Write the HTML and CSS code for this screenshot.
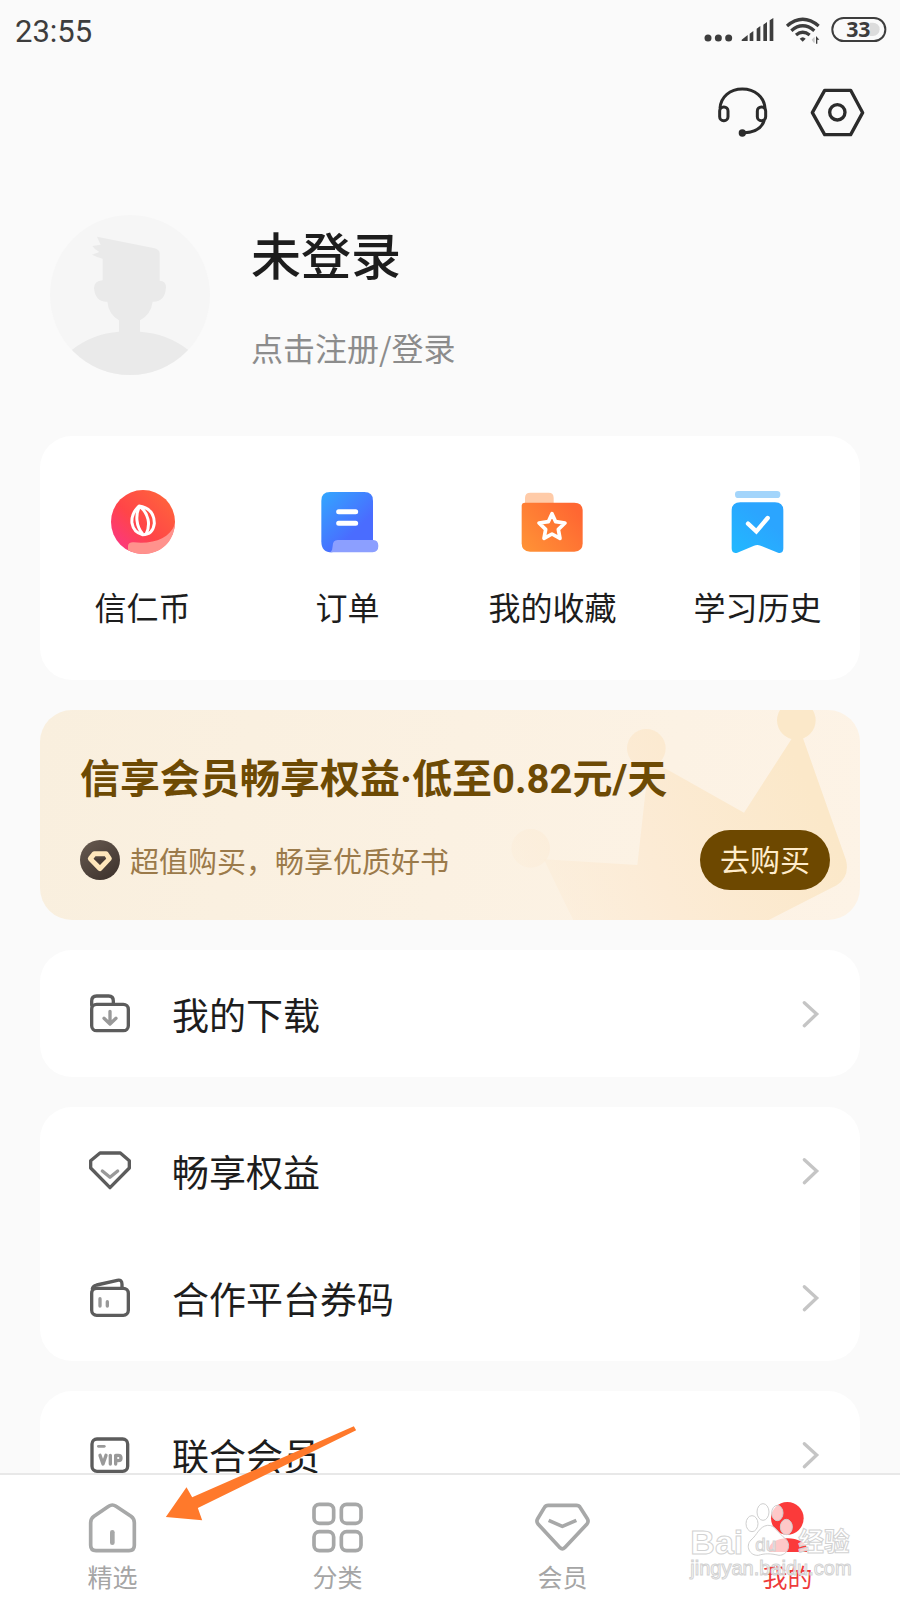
FILE: index.html
```html
<!DOCTYPE html>
<html lang="zh-CN">
<head>
<meta charset="utf-8">
<meta name="viewport" content="width=device-width, initial-scale=1">
<title>我的</title>
<link rel="stylesheet" href="styles.css">
</head>
<body>
<div class="app">
  <header class="status">
    <time class="clock">23:55</time>
    <svg class="status-icons" viewBox="70 45 558 90" fill="#3d3d3d" role="img" aria-label="信号 电量 33">
      <circle cx="85" cy="114" r="10.500"/><circle cx="116" cy="114" r="10.500"/><circle cx="147" cy="114" r="10.500"/>
      <path d="M187 123q-3-3 1-5l16-13v18zM210 123V101l11-8v30zM231 123V86l11-8v45zM251 123V74l11-8v57zM270 123V61l11-7v69z"/>
      <g fill="none" stroke="#3d3d3d" stroke-width="10"><path d="M322 78Q369 38 417 78"/><path d="M335 92Q369 63 404 92"/><path d="M349 105Q369 89 390 105"/></g>
      <path d="M360 116q9-9 18 0l-9 9z"/>
      <path d="M396 119l7-7v17zM403 112h2v16h-2z" fill="#c9c9c9"/><path d="M409 108l10 11h-6v12h-4z"/>
      <path d="M570 68h10a20 20 0 0 1 0 40h-10z" fill="#dcdcdc"/>
      <rect x="458" y="54" width="159" height="69" rx="34" fill="none" stroke="#3d3d3d" stroke-width="6"/>
      <text class="battery-text" x="536" y="111" text-anchor="middle">33</text>
    </svg>
  </header>

  <main class="page">
    <div class="tools">
      <button class="icon-btn" type="button" aria-label="客服">
        <svg width="51" height="52" viewBox="111 258 153 156" fill="none" stroke="#2b2b2b" stroke-width="9">
          <path d="M120 325C122 290 150 267 187 267S253 290 255 325"/>
          <rect x="119" y="321" width="25" height="41" rx="12"/><rect x="232" y="321" width="25" height="41" rx="12"/>
          <path d="M253 360C246 386 222 398 187 399"/><circle cx="187" cy="399" r="11" fill="#2b2b2b" stroke="none"/>
        </svg>
      </button>
      <button class="icon-btn" type="button" aria-label="设置">
        <svg width="55" height="52" viewBox="390 258 165 156" fill="none" stroke="#2b2b2b" stroke-width="10" stroke-linejoin="round">
          <path d="M434 271H512L548 338L512 404H434L397 338Z"/><circle cx="472" cy="337" r="23"/>
        </svg>
      </button>
    </div>

    <a class="profile" href="#login">
      <svg class="avatar" viewBox="60 45 480 480">
        <defs><clipPath id="disc"><circle cx="300" cy="285" r="240"/></clipPath></defs>
        <circle cx="300" cy="285" r="240" fill="#f6f6f6"/>
        <g clip-path="url(#disc)" fill="#eaeaea">
          <path d="M201 110L370 144Q389 148 389 160V242Q408 243 408 262Q405 307 368 305Q363 343 330 361V395Q410 400 474 449L540 525H60L126 449Q190 400 267 395V361Q236 343 232 305Q196 307 192 265Q192 243 218 241V176Q200 171 186 164L208 156Q194 149 187 138L212 134Z"/>
        </g>
      </svg>
      <span class="profile-text">
        <strong class="name">未登录</strong>
        <span class="hint">点击注册/登录</span>
      </span>
    </a>

    <nav class="card quick" aria-label="快捷入口">
      <a class="quick-item" href="#coin">
        <svg class="quick-icon" viewBox="80 48 216 216">
          <defs><linearGradient id="coin" x1="0" y1="1" x2="1" y2="0"><stop offset="0" stop-color="#fa3391"/><stop offset=".45" stop-color="#ff4548"/><stop offset="1" stop-color="#ff6a39"/></linearGradient></defs>
          <circle cx="188" cy="156" r="96" fill="url(#coin)"/>
          <path d="M284 162C280 216 242 252 188 252Q164 252 143 241V228Q144 216 160 217C220 222 266 208 284 162Z" fill="#ff928d"/>
          <g fill="none" stroke="#fff" stroke-width="9" stroke-linejoin="round"><path d="M176 108C158 125 153 141 155 160Q160 188 187 194Q218 194 222 160C222 132 206 113 176 108Z"/><path d="M177 110C165 135 167 169 187 192M181 111C204 131 211 162 198 191"/></g>
        </svg>
        <span>信仁币</span>
      </a>
      <a class="quick-item" href="#orders">
        <svg class="quick-icon" viewBox="696 48 216 216">
          <defs><linearGradient id="order" x1="0" y1="0" x2=".6" y2=".7"><stop offset="0" stop-color="#32a7ff"/><stop offset="1" stop-color="#4a6cff"/></linearGradient></defs>
          <path d="M750 66H853Q879 66 879 92V210L756 247Q724 247 724 215V92Q724 66 750 66Z" fill="url(#order)"/>
          <path d="M773 210H880Q895 210 895 228T878 247H751Q758 241 758 228Q758 210 773 210Z" fill="#8c9fff"/>
          <path d="M776 125H827M776 160H827" stroke="#fff" stroke-width="15" stroke-linecap="round"/>
        </svg>
        <span>订单</span>
      </a>
      <a class="quick-item" href="#favorites">
        <svg class="quick-icon" viewBox="112 48 216 216">
          <defs><linearGradient id="fav" x1="0" y1="1" x2="1" y2=".3"><stop offset="0" stop-color="#ff9436"/><stop offset="1" stop-color="#ff6732"/></linearGradient></defs>
          <path d="M136 100V84Q136 68 152 68H207Q222 68 222 84V100Z" fill="#ffcba8"/>
          <path d="M136 98H284Q309 98 309 123V220Q309 245 284 245H151Q126 245 126 220V108Q126 98 136 98Z" fill="url(#fav)"/>
          <path d="M217 131L228 155L256 159L236 178L241 205L217 192L193 205L198 178L178 159L206 155Z" fill="none" stroke="#fff" stroke-width="11" stroke-linejoin="round"/>
        </svg>
        <span>我的收藏</span>
      </a>
      <a class="quick-item" href="#history">
        <svg class="quick-icon" viewBox="726 48 216 216">
          <defs><linearGradient id="hist" x1="0" y1="1" x2=".6" y2=".3"><stop offset="0" stop-color="#21b9ff"/><stop offset="1" stop-color="#2ba5ff"/></linearGradient></defs>
          <rect x="765" y="63" width="136" height="21" rx="10" fill="#a3d5fb"/>
          <path d="M781 97H885Q910 97 910 122V235Q910 252 894 248L842 227Q832 223 822 227L772 248Q755 252 755 235V122Q755 97 781 97Z" fill="url(#hist)"/>
          <path d="M804 161L829 184L863 144" fill="none" stroke="#fff" stroke-width="13" stroke-linecap="round" stroke-linejoin="miter"/>
        </svg>
        <span>学习历史</span>
      </a>
    </nav>

    <section class="banner">
      <svg class="crown" viewBox="0 30 1140 630">
        <defs><linearGradient id="crown" gradientUnits="userSpaceOnUse" x1="100" y1="600" x2="960" y2="200"><stop offset="0" stop-color="#fcebd5" stop-opacity=".25"/><stop offset=".45" stop-color="#fcebd5"/><stop offset="1" stop-color="#fbe8c9"/></linearGradient></defs>
        <g fill="url(#crown)"><circle cx="152" cy="445" r="58"/><circle cx="499" cy="145" r="58"/><circle cx="949" cy="61" r="58"/>
        <path d="M192 478L472 495L505 200Q540 195 575 216L792 338L938 112H968L1098 480Q1110 530 1070 556L866 660H280Q230 560 192 478Z"/></g>
      </svg>
      <div class="banner-body">
        <h2 class="banner-title">信享会员畅享权益·低至0.82元/天</h2>
        <div class="banner-row">
          <svg class="badge" viewBox="150 420 120 120">
            <defs><linearGradient id="badge" x1="0" y1="0" x2=".7" y2="1"><stop offset="0" stop-color="#685b51"/><stop offset="1" stop-color="#40352f"/></linearGradient></defs>
            <circle cx="210" cy="480" r="60" fill="url(#badge)"/>
            <path d="M193 461H228L238 476L210 506L181 476Z" fill="none" stroke="#ffe7bb" stroke-width="15" stroke-linejoin="round"/>
            <path d="M191 476H228L210 493Z" fill="#4a3d35"/>
          </svg>
          <p class="banner-sub">超值购买，畅享优质好书</p>
          <button class="buy" type="button">去购买</button>
        </div>
      </div>
    </section>

    <div class="card">
      <a class="row" href="#downloads">
        <svg class="row-icon" viewBox="57 67 126 126">
          <path d="M65 104V91Q65 76 80 76H116Q130 76 130 91V100"/><rect x="65" y="101" width="110" height="79" rx="15"/>
          <path class="soft" d="M120 122V159M102 143L120 160L138 143"/>
        </svg>
        <span class="row-label">我的下载</span>
        <svg class="chevron" viewBox="60 113 66 96"><path d="M73 127L110 161L73 196"/></svg>
      </a>
    </div>

    <div class="card">
      <a class="row" href="#benefits">
        <svg class="row-icon" viewBox="57 538 126 126">
          <path d="M90 547H151L178 570V592L120 651L62 592V570Z"/><path class="soft" d="M97 601L120 620L143 601"/>
        </svg>
        <span class="row-label">畅享权益</span>
        <svg class="chevron" viewBox="60 113 66 96"><path d="M73 127L110 161L73 196"/></svg>
      </a>
      <a class="row" href="#coupons">
        <svg class="row-icon" viewBox="57 81 126 126">
          <rect x="65" y="115" width="110" height="81" rx="15"/><path d="M67 117Q68 108 80 105L142 91Q156 88 156 103V114"/>
          <path class="soft" d="M90 146V168M112 155V168"/>
        </svg>
        <span class="row-label">合作平台券码</span>
        <svg class="chevron" viewBox="60 113 66 96"><path d="M73 127L110 161L73 196"/></svg>
      </a>
    </div>

    <div class="card">
      <a class="row" href="#union">
        <svg class="row-icon" viewBox="57 553 126 126">
          <rect x="66" y="568" width="107" height="97" rx="15"/><path class="soft" d="M85 590H103" stroke-width="8"/>
          <path class="soft" d="M90 617L99 643L108 617M121 617V643M137 643V617H145Q153 617 153 625T145 633H137"/>
        </svg>
        <span class="row-label">联合会员</span>
        <svg class="chevron" viewBox="60 113 66 96"><path d="M73 127L110 161L73 196"/></svg>
      </a>
    </div>
  </main>

  <nav class="tabs" aria-label="主导航">
    <a class="tab" href="#featured">
      <svg class="tab-icon" viewBox="39 741 180 180"><path d="M62 818Q62 806 72 799L116 769Q127 761 138 769L183 799Q193 806 193 818V886Q193 902 177 902H78Q62 902 62 886Z"/><path d="M127 847V878" stroke-width="14"/></svg>
      <span>精选</span>
    </a>
    <a class="tab" href="#categories">
      <svg class="tab-icon" viewBox="714 741 180 180"><rect x="732" y="763" width="59" height="57" rx="16"/><rect x="814" y="763" width="59" height="57" rx="16"/><rect x="732" y="845" width="59" height="57" rx="16"/><rect x="814" y="845" width="59" height="57" rx="16"/></svg>
      <span>分类</span>
    </a>
    <a class="tab" href="#member">
      <svg class="tab-icon" viewBox="759 111 180 180"><path d="M805 136H889Q897 136 901 143L922 176Q927 184 921 192L854 263Q847 270 840 263L774 192Q768 184 773 176L793 143Q797 136 805 136Z"/><path d="M806 181L847 199L889 181" stroke-linecap="butt"/></svg>
      <span>会员</span>
    </a>
    <a class="tab tab-active" href="#mine" aria-current="page">
      <svg class="tab-icon" viewBox="264 201 180 180"><g fill="#fb3a3a" stroke="none"><circle cx="352" cy="265" r="49"/><path d="M297 366V354Q305 327 352 325Q401 327 411 354V366Z"/></g></svg>
      <span>我的</span>
    </a>
    <svg class="pointer" viewBox="280 520 590 300" aria-hidden="true"><path d="M288 802L350 713L367 743L852 530L859 542L384 775L397 812Z" fill="#ff792b"/></svg>
    <svg class="watermark" viewBox="50 210 510 249" aria-hidden="true">
      <g fill="#fff" fill-opacity=".72" stroke="#cfcfcf" stroke-width="3">
        <ellipse cx="245" cy="281" rx="18" ry="24"/><ellipse cx="278" cy="246" rx="18" ry="25"/><ellipse cx="321" cy="249" rx="17" ry="23"/><ellipse cx="348" cy="291" rx="18" ry="23"/>
        <path d="M292 286C316 284 325 312 345 326C365 344 352 376 326 376C300 370 283 370 264 376C238 378 224 348 242 330C261 315 266 289 292 286Z"/>
      </g>
      <g class="mark-text">
        <text x="60" y="372" font-size="102" font-weight="700">Bai</text>
        <text x="255" y="362" font-size="56">du</text>
        <text x="384" y="364" font-size="77" font-weight="700">经验</text>
        <text x="60" y="436" font-size="60">jingyan.baidu.com</text>
      </g>
    </svg>
  </nav>
</div>
</body>
</html>
```

FILE: styles.css
```css
* { box-sizing: border-box; }

body {
  margin: 0;
  background: #fafafa;
  color: #1d1d1d;
  font-family: "Noto Sans CJK SC", sans-serif;
}

a { color: inherit; text-decoration: none; }
button { border: 0; padding: 0; background: none; font: inherit; cursor: pointer; }
svg { display: block; flex: none; }

.app { display: flex; flex-direction: column; height: 100vh; }

.status {
  display: flex;
  flex: none;
  align-items: center;
  justify-content: space-between;
  height: 60px;
  padding: 0 11px 0 15px;
}
.clock { padding-top: 2px; font-family: Roboto, sans-serif; font-size: 31px; color: #3d3d3d; }
.status-icons { width: 186px; height: 30px; }
.battery-text { font: 700 64px "Open Sans", sans-serif; }

.page {
  display: flex;
  flex: 1;
  flex-direction: column;
  gap: 30px;
  min-height: 0;
  overflow: hidden;
  padding: 0 40px;
}
.page > * { flex: none; }

.tools {
  display: flex;
  align-items: center;
  justify-content: flex-end;
  gap: 42px;
  height: 104px;
  margin-right: -5px;
}
.icon-btn { display: block; }

.profile {
  display: flex;
  gap: 41px;
  padding: 21px 10px 29px;
}
.avatar { width: 160px; height: 160px; }
.profile-text { display: flex; flex-direction: column; gap: 34px; padding-top: 8px; }
.name { font-size: 50px; line-height: 60px; font-weight: 500; }
.hint { font-size: 32px; line-height: 60px; color: #8c8c8c; }

.card { border-radius: 32px; background: #fff; }

.quick { display: grid; grid-template-columns: repeat(4, 1fr); padding: 50px 0 54px; }
.quick-item {
  display: flex;
  flex-direction: column;
  align-items: center;
  gap: 28px;
  font-size: 32px;
  line-height: 40px;
}
.quick-icon { width: 72px; height: 72px; }

.banner {
  position: relative;
  overflow: hidden;
  border-radius: 32px;
  background: linear-gradient(100deg, #f9efde, #fdf3e6);
}
.crown { position: absolute; top: 0; right: 0; width: 380px; height: 210px; }
.banner-body { position: relative; padding: 40px 30px 30px 40px; }
.banner-title {
  margin: 0 0 20px;
  font-family: Roboto, "Noto Sans CJK SC", sans-serif;
  font-size: 40px;
  line-height: 60px;
  font-weight: 700;
  color: #6d4a04;
}
.banner-row { display: flex; align-items: center; }
.badge { width: 40px; height: 40px; }
.banner-sub { flex: 1; margin: 0 0 0 10px; font-size: 29px; line-height: 40px; color: #9b7a4a; }
.buy {
  width: 130px;
  height: 60px;
  border-radius: 30px;
  background: #6d4800;
  color: #ffeccb;
  font-size: 30px;
  line-height: 56px;
  padding-bottom: 4px;
}

.row { display: flex; align-items: center; height: 127px; padding: 0 38px 0 49px; }
.row-icon {
  width: 42px;
  height: 42px;
  fill: none;
  stroke: #5c5c5c;
  stroke-width: 10;
  stroke-linecap: round;
  stroke-linejoin: round;
}
.soft { stroke: #999; }
.row-label { flex: 1; margin-left: 41px; font-size: 37px; line-height: 50px; }
.chevron {
  width: 22px;
  height: 32px;
  fill: none;
  stroke: #c5c5c5;
  stroke-width: 10;
  stroke-linecap: round;
}

.tabs {
  position: relative;
  display: grid;
  flex: none;
  grid-template-columns: repeat(4, 1fr);
  padding: 22px 0 9px;
  border-top: 2px solid #e8e8e8;
  background: #fff;
}
.tab {
  display: flex;
  flex-direction: column;
  align-items: center;
  gap: 4px;
  font-size: 25px;
  line-height: 30px;
  color: #a5a5a5;
}
.tab-active { color: #ee3b3b; }
.tab-icon {
  width: 60px;
  height: 60px;
  fill: none;
  stroke: #a7a8a8;
  stroke-width: 11;
  stroke-linecap: round;
  stroke-linejoin: round;
}
.pointer { position: absolute; top: -52px; left: 163px; width: 197px; height: 100px; }
.watermark { position: absolute; right: 43px; bottom: 17px; width: 170px; height: 83px; }
.mark-text {
  fill: #fff;
  fill-opacity: .8;
  stroke: #d2d2d2;
  stroke-width: 3;
  font-family: "Liberation Sans", "Noto Sans CJK SC", sans-serif;
}
```
